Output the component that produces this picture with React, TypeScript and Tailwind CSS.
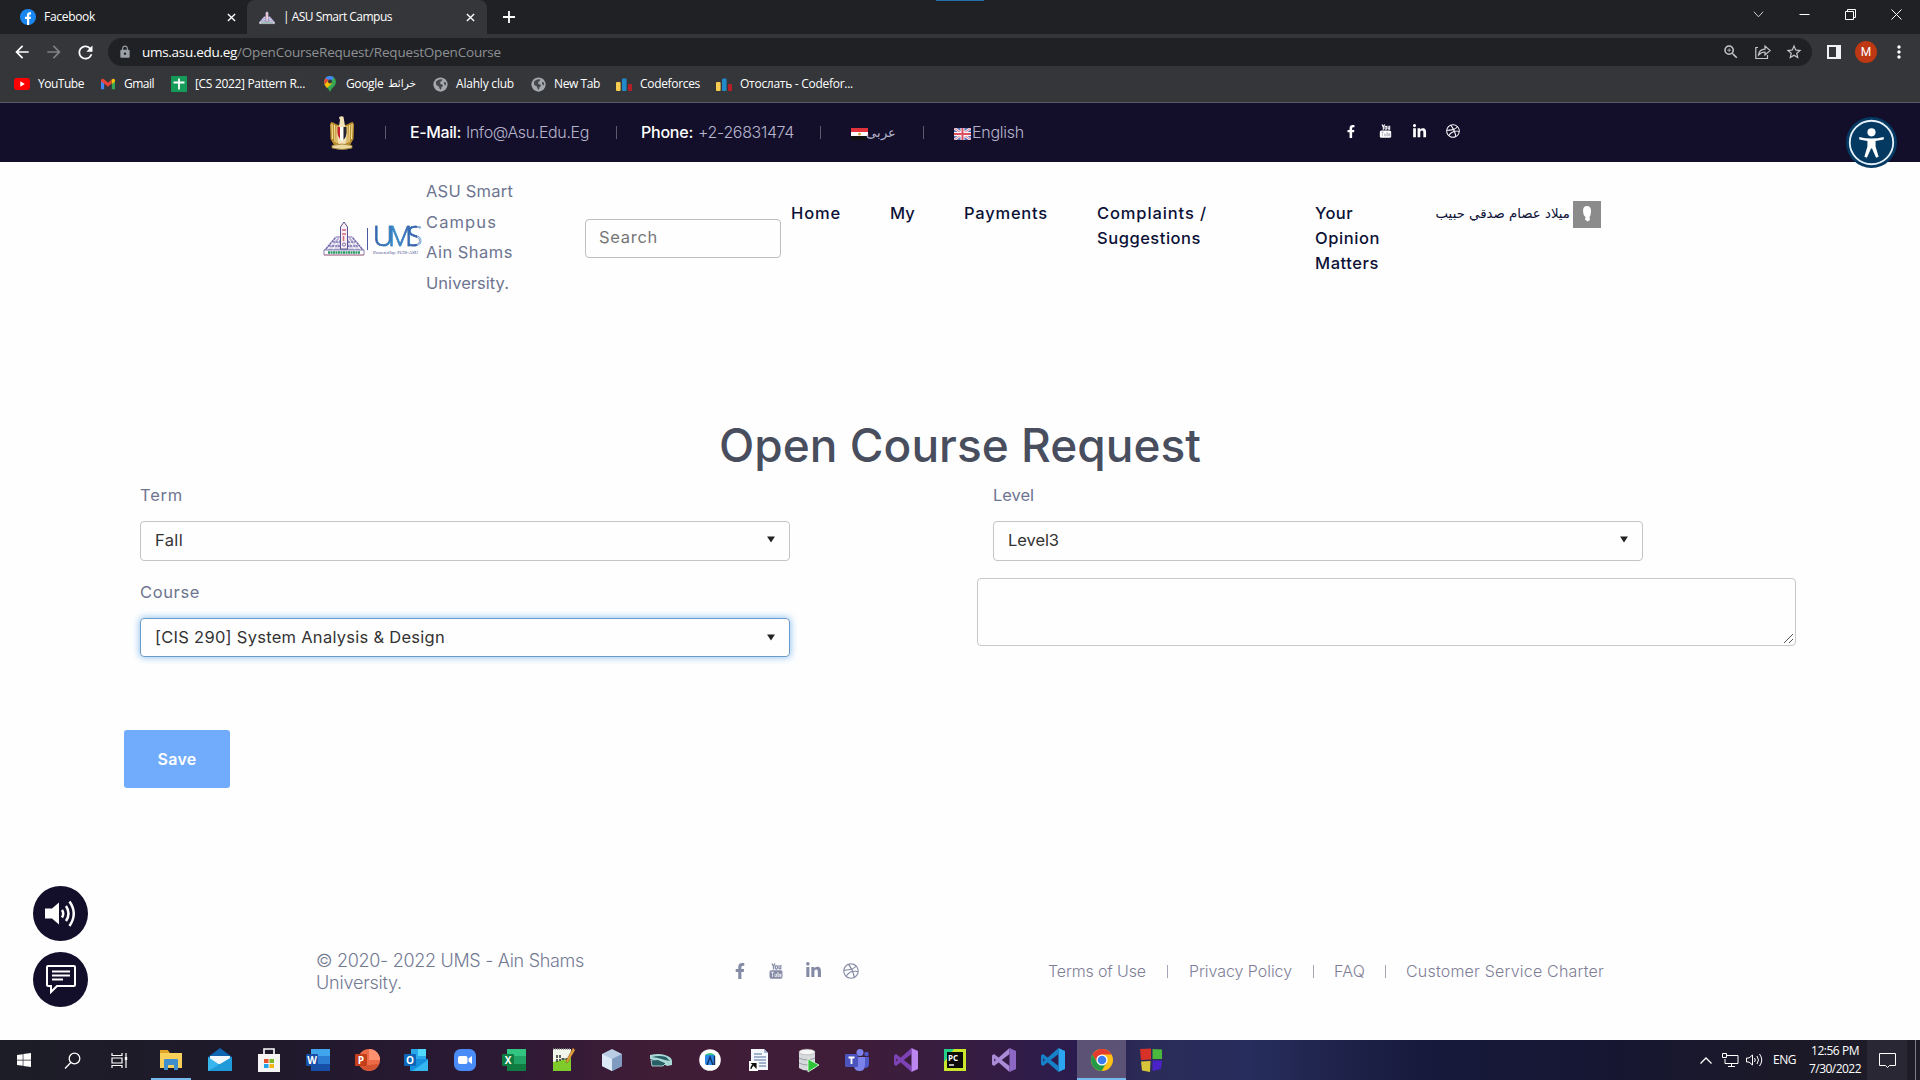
import { useLayoutEffect, useRef, type ReactNode } from "react";
import { FaFacebookF, FaLinkedinIn, FaDribbble, FaWindows } from "react-icons/fa";
import { MdLock, MdRefresh, MdArrowBack, MdArrowForward, MdZoomIn, MdStarBorder, MdPublic, MdMoreVert } from "react-icons/md";

/* Single line of text whose tracking is adjusted to fill the width of its box. */
function Fit({ className = "", children }: { className?: string; children: string }) {
  const box = useRef<HTMLSpanElement>(null);
  const inner = useRef<HTMLSpanElement>(null);
  useLayoutEffect(() => {
    const b = box.current, i = inner.current;
    if (!b || !i) return;
    i.style.letterSpacing = "0px";
    const natural = i.getBoundingClientRect().width;
    i.style.letterSpacing = `${(b.getBoundingClientRect().width - natural) / children.length}px`;
  }, [children]);
  return (
    <span ref={box} className={`inline-block shrink-0 whitespace-pre ${className}`}>
      <span ref={inner}>{children}</span>
    </span>
  );
}

const UI = "font-['Open_Sans',sans-serif]";

function YouTubeOld({ className, inset }: { className: string; inset: string }) {
  return (
    <svg viewBox="0 0 14 16" className={`overflow-visible ${className}`} fill="currentColor">
      <path d="M3 0.500 L4.500 3.500 V6.500 M6 0.500 L4.500 3.500" stroke="currentColor" strokeWidth="1.300" fill="none" />
      <rect x="6.400" y="2.500" width="2" height="3.600" rx="1" fill="none" stroke="currentColor" strokeWidth="1.200" />
      <path d="M10 2 V5.500 Q10 6.200 11.500 5.500 M11.800 2 V6.500" stroke="currentColor" strokeWidth="1.200" fill="none" />
      <rect x="0.500" y="7.300" width="13" height="8.400" rx="1.800" />
      <path d="M2 9.300 H5 M3.500 9.300 V14 M6 10.800 V13.600 H7.500 V10.800 M8.900 9 V13.600 H10.200 V11 H8.900 M12.600 12.200 H11.400 V11 H12.500 M11.400 12 V13.600 H12.600" className={inset} strokeWidth="0.700" fill="none" />
    </svg>
  );
}

function Tower({ className }: { className: string }) {
  return (
    <svg viewBox="0 0 42 35" className={className}>
      <path d="M13 15 L29 15 L41 29 V34 H1 V29 Z" fill="#b9b1d8" />
      <path d="M14 17 L3 30 M17 17 L9 30 M25 17 L33 30 M28 17 L39 30 M8 23 H34 M5 27 H37" stroke="#fff" strokeWidth="1" />
      <path d="M12 17 L2 29 M30 17 L40 29 M10 21 H32 M6 25 H36" stroke="#6c639f" strokeWidth="1.2" strokeDasharray="2 1" fill="none" />
      <path d="M17.500 28 V6 L21 1 L24.500 6 V28 Z" fill="#f8eef4" stroke="#5b5290" strokeWidth="1" />
      <path d="M19 9 H23 M19 13 H23 M20.500 15 V20" stroke="#d46a7c" strokeWidth="1.5" />
      <circle cx="21" cy="23.500" r="1.6" fill="none" stroke="#5b5290" strokeWidth="0.8" />
      <path d="M1 29 H41 V34 H1 Z" fill="#fff" stroke="#6a62a0" strokeWidth="0.8" />
      <path d="M5 31.500 H37" stroke="#2d9767" strokeWidth="2.600" strokeDasharray="2 0.500" />
      <path d="M1 34 H41" stroke="#d27b8c" strokeWidth="0.8" />
    </svg>
  );
}

function Eagle() {
  return (
    <svg viewBox="0 0 26 34" className="h-[34px] w-[26px]">
      <path d="M10 9 C7 9 5 6 2 6 L1 9 L1.500 23 L5 29 H21 L24.500 23 L25 9 L24 6 C21 6 19 9 16 9 Z" fill="#b98c2c" />
      <path d="M3 8 L3.500 23 M5.500 9 L6 26 M8 10 V27 M18 10 V27 M20.500 9 L20 26 M23 8 L22.500 23" stroke="#f5e2a0" strokeWidth="1.100" />
      <path d="M10 1.500 Q12 -0.500 14.500 0.800 L15 4 L16 10 Q19 19 16.500 28 H9.500 Q7 19 10 10 L11 4 Z" fill="#f2e3b6" />
      <path d="M8.500 11 H11 V23 Q8.500 20 8.500 17 Z" fill="#c8222c" />
      <path d="M11 11 H14.500 V24 L13 25 L11 23 Z" fill="#fff" />
      <path d="M14.500 11 H17.500 V17 Q17.500 21 14.500 24 Z" fill="#262330" />
      <path d="M3 29.500 Q13 26.500 23 29.500 V32 Q13 35 3 32 Z" fill="#ead9a0" stroke="#a07c2c" strokeWidth="0.800" />
    </svg>
  );
}

function Close() {
  return <svg viewBox="0 0 10 10" className="size-[9px]" stroke="#fff" strokeWidth="1.500"><path d="M1 1 L9 9 M9 1 L1 9" /></svg>;
}

function CodeforcesIcon() {
  return (
    <svg viewBox="0 0 16 16" className="h-4 w-4">
      <rect x="0" y="6" width="4.600" height="9" rx="1" fill="#f7cb4d" />
      <rect x="6" y="2.500" width="4.600" height="12.500" rx="1" fill="#2189c7" />
      <rect x="12" y="8" width="4" height="7" rx="1" fill="#b81e26" />
    </svg>
  );
}

function GlobeIcon() {
  return (
    <svg viewBox="0 0 16 16" className="ml-[17px] size-[15px]">
      <circle cx="8" cy="8" r="7.600" fill="#a5a8ac" />
      <path d="M3 5 Q6 2 10 2.500 Q10 4.500 8 5 L7.500 7 L10.500 8.500 Q11 10 9 11 L8.500 13.500 Q6.500 13 6.500 10.500 L3.500 8.500 Z" fill="#46474b" />
      <path d="M11.500 5 L14 6 L13.500 9 L12 8 Z" fill="#46474b" />
    </svg>
  );
}

function BrowserChrome() {
  return (
    <div className={`bg-[#35363a] text-white ${UI}`}>
      <div className="relative flex h-[34px] items-center bg-[#202124] text-[12px]">
        <div className="flex h-full w-[247px] items-center pl-5">
          <svg viewBox="0 0 16 16" className="size-4">
            <circle cx="8" cy="8" r="8" fill="#1a86f0" />
            <path d="M7 16 V10 H5 V7.700 H7 V6 Q7 3.300 9.600 3.300 H11 V5.400 H10 Q9.200 5.400 9.200 6.300 V7.700 H11 L10.600 10 H9.200 V16 Z" fill="#fff" />
          </svg>
          <Fit className="ml-2 w-[51px]">Facebook</Fit>
          <div className="ml-[132px]"><Close /></div>
        </div>
        <div className="flex h-full w-[240px] items-center rounded-t-lg bg-[#35363a] pl-3">
          <Tower className="h-[15px] w-4" />
          <Fit className="ml-2 w-[109px]">| ASU Smart Campus</Fit>
          <div className="ml-[74px]"><Close /></div>
        </div>
        <svg viewBox="0 0 12 12" className="ml-4 size-3" stroke="#fff" strokeWidth="1.800"><path d="M6 0 V12 M0 6 H12" /></svg>
        <div className="ml-auto flex items-center gap-[35px] pr-[18px] pb-[5px]">
          <svg viewBox="0 0 12 12" className="size-[11px]" stroke="#ddd" fill="none"><path d="M1 3 L6 8.500 L11 3" /></svg>
          <svg viewBox="0 0 11 11" className="size-[11px]" stroke="#fff" fill="none"><path d="M0.500 5.500 H10.500" /></svg>
          <svg viewBox="0 0 11 11" className="size-[11px]" stroke="#fff" fill="none"><path d="M0.500 2.500 H8.500 V10.500 H0.500 Z M2.500 2.500 V0.500 H10.500 V8.500 H8.500" /></svg>
          <svg viewBox="0 0 11 11" className="size-[11px]" stroke="#fff" fill="none"><path d="M0.500 0.500 L10.500 10.500 M10.500 0.500 L0.500 10.500" /></svg>
        </div>
        <div className="absolute top-0 left-[936px] h-px w-12 bg-[#2570a8]" />
      </div>
      <div className="flex h-9 items-center">
        <MdArrowBack className="ml-3 size-5" />
        <MdArrowForward className="ml-3 size-5 text-[#808184]" />
        <MdRefresh className="ml-[11px] size-[21px]" />
        <div className="ml-3 flex h-7 w-[1704px] items-center rounded-full bg-[#202124] pl-[10px] text-[13.500px]">
          <MdLock className="size-[14px] text-[#9aa0a6]" />
          <Fit className="ml-[10px] w-[95px]">ums.asu.edu.eg</Fit>
          <Fit className="w-[264px] text-[#8d9094]">/OpenCourseRequest/RequestOpenCourse</Fit>
          <MdZoomIn className="mr-[15px] ml-auto size-[18px] text-[#c4c7c9]" />
          <svg viewBox="0 0 16 16" className="mr-[14px] size-4" fill="none" stroke="#c4c7c9" strokeWidth="1.200">
            <path d="M3 3.500 H0.800 V14.500 H12.500 V11" />
            <path d="M3.500 11 Q4 5.500 10 5.200 V2 L15.200 6.500 L10 11 V8 Q6 8 3.500 11 Z" />
          </svg>
          <MdStarBorder className="mr-[9px] size-[18px] text-[#c4c7c9]" />
        </div>
        <svg viewBox="0 0 14 14" className="ml-[15px] size-[14px]"><path d="M0 0 H14 V14 H0 Z M2 2 V12 H9 V2 Z" fill="#f1f3f4" fillRule="evenodd" /></svg>
        <div className="ml-[14px] flex size-[22px] items-center justify-center rounded-full bg-[#bd3813] font-['Roboto'] text-[12px]">M</div>
        <MdMoreVert className="ml-3 size-5" />
      </div>
      <div className="flex h-8 items-center pb-[4px] pl-[14px] text-[12px] whitespace-nowrap">
        <svg viewBox="0 0 16 12" className="h-3 w-4"><rect width="16" height="12" rx="3" fill="#f00" /><path d="M6.300 3.300 L10.800 6 L6.300 8.700 Z" fill="#fff" /></svg>
        <Fit className="ml-2 w-[46px]">YouTube</Fit>
        <svg viewBox="0 0 16 12" className="ml-[17px] h-3 w-[14px]">
          <path d="M0 1.500 V12 H3.600 V4 Z" fill="#4285f4" /><path d="M12.400 4 V12 H16 V1.500 Z" fill="#34a853" />
          <path d="M0 1.500 Q1.500 -1 4 1 L8 4.500 L12 1 V5.500 L8 9 L3.600 5.500 L0 3 Z" fill="#ea4335" /><path d="M12 1 Q15 -1 16 1.500 V3.500 L12.400 6 Z" fill="#fbbc04" />
        </svg>
        <Fit className="ml-[9px] w-[30px]">Gmail</Fit>
        <svg viewBox="0 0 16 16" className="ml-[17px] size-4"><rect width="16" height="16" rx="1" fill="#169c59" /><path d="M8 2.500 V13.500 M2.500 6.500 H13.500" stroke="#fff" strokeWidth="1.800" /></svg>
        <Fit className="ml-2 w-[110px]">[CS 2022] Pattern R...</Fit>
        <svg viewBox="0 0 12 16" className="ml-[19px] h-4 w-3">
          <path d="M6 0 A6 6 0 0 1 12 6 Q12 9 9 11.500 Q7 13 6 16 Q5 13 3 11.500 Q0 9 0 6 A6 6 0 0 1 6 0 Z" fill="#34a853" />
          <path d="M6 0 A6 6 0 0 0 0.800 3 L6 6 L10 1.500 A6 6 0 0 0 6 0 Z" fill="#4285f4" /><path d="M1.300 2.200 Q-0.600 5 0.500 8.500 L5 4 Z" fill="#ea4335" />
          <path d="M0.500 8.500 L5 4 L8 7.500 L3 12 Q1.300 10.300 0.500 8.500Z" fill="#fbbc04" /><circle cx="6" cy="5.500" r="2" fill="#35363a" />
        </svg>
        <Fit className="ml-[10px] w-[40px]">Google </Fit>
        <span className="w-[30px] font-['DejaVu_Sans'] text-[10.500px]" dir="rtl">خرائط</span>
        <GlobeIcon />
        <Fit className="ml-[8px] w-[58px]">Alahly club</Fit>
        <GlobeIcon />
        <Fit className="ml-[8px] w-[46px]">New Tab</Fit>
        <div className="ml-4"><CodeforcesIcon /></div>
        <Fit className="ml-2 w-[60px]">Codeforces</Fit>
        <div className="ml-4"><CodeforcesIcon /></div>
        <Fit className="ml-2 w-[113px]">Отослать - Codefor...</Fit>
      </div>
      <div className="h-px bg-[#5c5b68]" />
    </div>
  );
}

function TopBar() {
  const bar = "h-[13px] w-px bg-[#5d5a70]";
  return (
    <div className="relative flex h-[59px] items-center bg-[#130f2b] pl-[329px] text-[16px] text-[#b6b4cb]">
      <Eagle />
      <div className={`ml-[30px] ${bar}`} />
      <Fit className="ml-6 w-[51px] pb-[2px] font-medium text-white">E-Mail:</Fit>
      <Fit className="ml-[5px] w-[123px] pb-[2px] font-light">Info@Asu.Edu.Eg</Fit>
      <div className={`ml-[27px] ${bar}`} />
      <Fit className="ml-6 w-[52px] pb-[2px] font-medium text-white">Phone:</Fit>
      <Fit className="ml-[5px] w-[96px] pb-[2px] font-light">+2-26831474</Fit>
      <div className={`ml-[26px] ${bar}`} />
      <svg viewBox="0 0 17 12" className="mt-[2px] ml-[30px] h-3 w-[17px]"><rect width="17" height="4" fill="#e0333c" /><rect y="4" width="17" height="4" fill="#fff" /><rect y="8" width="17" height="4" fill="#111" /><circle cx="8.500" cy="6" r="1.500" fill="#d8aa4a" /></svg>
      <span className="w-[28px] font-['DejaVu_Sans'] text-[13px] font-light whitespace-nowrap" dir="rtl">عربى</span>
      <div className={`ml-[27px] ${bar}`} />
      <svg viewBox="0 0 17 12" className="mt-[2px] ml-[30px] h-3 w-[17px]"><rect width="17" height="12" fill="#5b72b6" /><path d="M0 0 L17 12 M17 0 L0 12" stroke="#f3f3f8" strokeWidth="2.600" /><path d="M0 0 L17 12 M17 0 L0 12" stroke="#e46a76" strokeWidth="0.900" /><path d="M8.500 0 V12 M0 6 H17" stroke="#f3f3f8" strokeWidth="4" /><path d="M8.500 0 V12 M0 6 H17" stroke="#e0505e" strokeWidth="2" /></svg>
      <Fit className="ml-px w-[52px] pb-[2px] font-light">English</Fit>
      <div className="ml-[321px] flex items-center pb-[3px] text-white">
        <FaFacebookF className="h-[13px] w-[12px]" />
        <YouTubeOld className="ml-[22px] h-[14px] w-[13px]" inset="stroke-[#9a98aa]" />
        <FaLinkedinIn className="ml-[20px] h-[15px] w-[15px]" />
        <FaDribbble className="ml-[19px] size-[14px]" />
      </div>
      <svg viewBox="0 0 50 50" className="absolute top-[14px] left-[1846px] z-10 size-[51px]">
        <circle cx="25" cy="25" r="25" fill="#043962" /><circle cx="25" cy="25" r="21.300" fill="#043962" stroke="#e6f1fa" strokeWidth="1.800" />
        <circle cx="25" cy="15" r="4" fill="#fff" />
        <path d="M13 19.500 Q25 22.500 37 19.500 V22 L29 23.500 V29 L32 39 L29.500 40 L25.500 31 H24.500 L20.500 40 L18 39 L21 29 V23.500 L13 22 Z" fill="#fff" />
      </svg>
    </div>
  );
}

function Nav() {
  return (
    <div className="flex h-[250px] items-start pl-[323px] text-[16.500px] text-[#0c1136]">
      <div className="mt-[59px] flex w-[98px] items-center">
        <Tower className="h-[35px] w-[42px]" />
        <div className="ml-[2px] h-[22px] w-px bg-[#4b5aa0]" />
        <div className="ml-[5px] flex w-[48px] flex-col">
          <Fit className="w-[44px] bg-gradient-to-r from-[#35559c] via-[#39a4dc] to-[#3a4a9c] bg-clip-text font-['Open_Sans'] text-[28px] leading-[27px] font-light text-transparent [-webkit-text-stroke:0.600px_#356eb5]">UMS</Fit>
          <Fit className="w-[45px] font-['Liberation_Serif'] text-[5px] leading-[7px] text-[#4b5690]">Powered by: FCIS-ASU</Fit>
        </div>
      </div>
      <div className="mt-[14px] ml-[5px] flex w-[159px] flex-col leading-[30.600px] text-[#6d7590]">
        <Fit className="w-[87px]">ASU Smart</Fit>
        <Fit className="w-[71px]">Campus</Fit>
        <Fit className="w-[87px]">Ain Shams</Fit>
        <Fit className="w-[83px]">University.</Fit>
      </div>
      <div className="mt-[57px] flex h-[39px] w-[196px] items-center rounded-[4px] border border-[#bfbfbf] pb-[3px] pl-[13px] text-[#767676]">
        <Fit className="w-[59px]">Search</Fit>
      </div>
      <div className="mt-[39px] ml-[10px] flex leading-[25px]">
        <Fit className="w-[50px] font-medium">Home</Fit>
        <Fit className="ml-[49px] w-[25px] font-medium">My</Fit>
        <Fit className="ml-[49px] w-[84px] font-medium">Payments</Fit>
        <div className="ml-[49px] flex w-[218px] flex-col font-medium">
          <Fit className="w-[110px]">Complaints /</Fit>
          <Fit className="w-[104px]">Suggestions</Fit>
        </div>
        <div className="flex w-[121px] flex-col font-medium">
          <Fit className="w-[38px]">Your</Fit>
          <Fit className="w-[65px]">Opinion</Fit>
          <Fit className="w-[64px]">Matters</Fit>
        </div>
        <span className="w-[134px] text-right font-['DejaVu_Sans'] text-[13.300px] whitespace-nowrap" dir="rtl">ميلاد عصام صدقي حبيب</span>
        <svg viewBox="0 0 28 27" className="ml-[3px] h-[27px] w-[28px]"><rect width="28" height="27" fill="#8b8b8b" /><path d="M14 5 Q18 5 18 10 Q18 14 16.500 16 L17 19 L14.500 20.500 L12 18.500 L12.500 16 Q10 14 10 10 Q10 5 14 5 Z" fill="#fff" /></svg>
      </div>
    </div>
  );
}

function Select({ children, focused = false }: { children: ReactNode; focused?: boolean }) {
  return (
    <div className={`flex w-[650px] items-center justify-between rounded-[4px] border pr-[13px] pl-[14px] text-[#333] ${focused ? "h-[39px] border-[#6a9ccb] pb-px shadow-[0_0_7px_1px_#9cc8f0]" : "h-10 border-[#c4c4c4] pb-[3px]"}`}>
      {children}
      <svg viewBox="0 0 10 8" className="h-[7px] w-[10px]"><path d="M0.500 0.500 H9.500 L5 7.500 Z" fill="#222" /></svg>
    </div>
  );
}

function Form() {
  return (
    <div className="h-[474px] text-[16.500px] leading-6">
      <div className="flex h-[70px] items-center justify-center pb-[4px]">
        <Fit className="w-[482px] text-[46px] leading-[60px] font-medium text-[#484e5e]">Open Course Request</Fit>
      </div>
      <div className="flex pl-[140px] text-[#6d7590]">
        <div className="flex w-[853px] flex-col">
          <Fit className="mt-px w-[43px]">Term</Fit>
          <div className="mt-[14px]"><Select><Fit className="w-[28px]">Fall</Fit></Select></div>
          <Fit className="mt-[19px] w-[60px]">Course</Fit>
          <div className="mt-[14px]"><Select focused><Fit className="w-[290px]">[CIS 290] System Analysis &amp; Design</Fit></Select></div>
        </div>
        <div className="flex flex-col">
          <Fit className="mt-px w-[41px]">Level</Fit>
          <div className="mt-[14px]"><Select><Fit className="w-[51px]">Level3</Fit></Select></div>
          <div className="mt-[17px] -ml-[16px] flex h-[68px] w-[819px] items-end justify-end rounded-[4px] border border-[#c8c8c8] p-[2px]">
            <svg viewBox="0 0 9 9" className="size-[9px]" stroke="#555"><path d="M0 9 L9 0 M5 9 L9 5" /></svg>
          </div>
        </div>
      </div>
      <div className="mt-[73px] ml-[124px] flex h-[58px] w-[106px] items-center justify-center rounded-[3px] bg-[#70abfc] text-[16px] font-semibold text-white">
        <Fit className="w-[39px]">Save</Fit>
      </div>
    </div>
  );
}

function Footer() {
  const bar = "h-[13px] w-px bg-[#a6a5b8]";
  return (
    <div className="flex h-[154px] items-start pl-[33px]">
      <div className="flex flex-col gap-[11px]">
        <div className="flex size-[55px] items-center justify-center rounded-full bg-[#130f2b]">
          <svg viewBox="0 0 34 28" className="h-[28px] w-[34px]" fill="none" stroke="#fff" strokeWidth="2.500">
            <path d="M1 8.500 H8 L15 2.500 V24.500 L8 18.500 H1 Z" fill="#fff" stroke="none" /><path d="M18 10 Q20.500 13.500 18 17.500 M22 6 Q27 13.500 22 21 M25.500 1.500 Q34 13.500 25.500 26" />
          </svg>
        </div>
        <div className="flex size-[55px] items-center justify-center rounded-full bg-[#130f2b]">
          <svg viewBox="0 0 30 29" className="h-[29px] w-[30px]" fill="none" stroke="#fff" strokeWidth="2">
            <path d="M2 1 H28 Q29 1 29 2 V20 Q29 21 28 21 H11 L5 27 V21 H2 Q1 21 1 20 V2 Q1 1 2 1 Z" /><path d="M6 6.500 H24 M6 10.500 H24 M6 14.500 H17" />
          </svg>
        </div>
      </div>
      <div className="mt-[64px] ml-[228px] flex w-[419px] flex-col text-[18px] leading-[22px] font-light text-[#737a94]">
        <Fit className="w-[268px]">© 2020- 2022 UMS - Ain Shams</Fit>
        <Fit className="w-[86px]">University.</Fit>
      </div>
      <div className="mt-[76px] flex w-[313px] items-center text-[#858ba5]">
        <FaFacebookF className="h-[16px] w-[10px]" />
        <YouTubeOld className="ml-[24px] h-[16px] w-[14px]" inset="stroke-white" />
        <FaLinkedinIn className="ml-[22px] h-[17px] w-[17px]" />
        <FaDribbble className="ml-[21px] size-4" />
      </div>
      <div className="mt-[73px] flex items-center text-[16px] leading-6 font-light text-[#7e7e98]">
        <Fit className="w-[98px]">Terms of Use</Fit><div className={`mx-[21px] ${bar}`} />
        <Fit className="w-[103px]">Privacy Policy</Fit><div className={`mr-[20px] ml-[21px] ${bar}`} />
        <Fit className="w-[31px]">FAQ</Fit><div className={`mr-[20px] ml-[20px] ${bar}`} />
        <Fit className="w-[198px]">Customer Service Charter</Fit>
      </div>
    </div>
  );
}

function Office({ letter, dark, mid, light }: { letter: string; dark: string; mid: string; light: string }) {
  return (
    <>
      <rect x="5" y="1" width="19" height="22" rx="1" fill={mid} /><path d="M5 1 H24 V8 H5 Z" fill={light} /><path d="M5 16 H24 V23 H5 Z" fill={dark} />
      <rect x="0" y="6" width="12" height="12" rx="1" fill={dark} />
      <text x="6" y="15.500" fontSize="10" fontWeight="700" textAnchor="middle" fill="#fff" fontFamily="Open Sans">{letter}</text>
    </>
  );
}

function VisualStudio({ dark, light }: { dark: string; light: string }) {
  return (
    <>
      <path d="M0 7.500 L2 6 L17.500 18 V24 L0 8.500 Z" fill={dark} />
      <path d="M0 16.500 L2 18 L17.500 6 V0 L0 15.500 Z" fill={dark} />
      <path d="M0 7.500 L2.300 9.500 V14.500 L0 16.500 Z" fill={dark} />
      <path d="M17.500 0 L24 3 V21 L17.500 24 Z" fill={light} />
    </>
  );
}

const apps: ReactNode[] = [
  <><path d="M1 3 H9 L11 5 H23 V20 H1 Z" fill="#f8cf58" /><path d="M1 2 H9 L10 5 H1 Z" fill="#e0a526" /><path d="M5 12 Q5 11 6 11 H18 Q19 11 19 12 V22 H15 V17 H9 V22 H5 Z" fill="#3f8fce" /></>,
  <><path d="M0 9 L12 0 L24 9 V23 H0 Z" fill="#0f65b0" /><path d="M2 8 H22 V16 H2 Z" fill="#f2f8fc" /><path d="M0 9 L12 17 L24 9 V23 H0 Z" fill="#38b7ee" /><path d="M0 23 L24 9 V23 Z" fill="#219ad9" /></>,
  <><path d="M7 6 V1 H17 V6" fill="none" stroke="#fff" strokeWidth="1.600" /><path d="M1 6 H23 V24 H1 Z" fill="#f5f5f5" /><path d="M7 11 H11.500 V15 H7 Z" fill="#e8522b" /><path d="M12.500 11 H17 V15 H12.500 Z" fill="#7cb928" /><path d="M7 16 H11.500 V20 H7 Z" fill="#20a4e8" /><path d="M12.500 16 H17 V20 H12.500 Z" fill="#f7b617" /></>,
  <Office letter="W" dark="#174fa8" mid="#2b7cd3" light="#41a5ee" />,
  <><circle cx="14" cy="12" r="11" fill="#ed6c47" /><path d="M14 1 A11 11 0 0 1 25 12 H14 Z" fill="#ff9070" /><path d="M5 18 A11 11 0 0 0 24 16 Z" fill="#d35230" /><rect y="6" width="12" height="12" rx="1" fill="#c43e1c" /><text x="6" y="15.500" fontSize="10" fontWeight="700" textAnchor="middle" fill="#fff" fontFamily="Open Sans">P</text></>,
  <><path d="M7 1 H22 V12 H7 Z" fill="#28a8ea" /><path d="M14 1 H22 V8 H14 Z" fill="#50d9ff" /><path d="M6 11 H24 V23 H6 Z" fill="#1490df" /><path d="M24 12 L8 23 H24 Z" fill="#35b8f1" /><rect y="6" width="12" height="12" rx="1" fill="#0f65b8" /><text x="6" y="15.500" fontSize="10" fontWeight="700" textAnchor="middle" fill="#fff" fontFamily="Open Sans">O</text></>,
  <><rect x="1" y="1" width="22" height="22" rx="6.500" fill="#4a8cf7" /><rect x="5" y="8" width="9.500" height="8" rx="2" fill="#fff" /><path d="M15.500 10.500 L19 8 V16 L15.500 13.500 Z" fill="#fff" /></>,
  <Office letter="X" dark="#107c41" mid="#21a366" light="#33c481" />,
  <><path d="M2 1 H20 V23 H2 Z" fill="#f2f5ea" /><path d="M2 14 L20 10 V23 H2 Z" fill="#7fcb2c" /><path d="M2 1 H20" stroke="#888" strokeWidth="1.500" strokeDasharray="1 1" /><path d="M6 7 V15 M9 7 V13 M10.500 11 H17" stroke="#222" strokeWidth="1.400" strokeDasharray="3 1" /><path d="M22 0 L24 2 L17 14 L15 15 L15.500 12 Z" fill="#e0a13c" stroke="#915d24" strokeWidth="0.500" /></>,
  <><path d="M12 1 L22 6 V18 L12 23 L2 18 V6 Z" fill="#b9cde4" /><path d="M2 6 L12 11 V23 L2 18 Z" fill="#dceaf7" /><path d="M12 11 L22 6 V18 L12 23 Z" fill="#7f9cc0" /></>,
  <><path d="M1 7 Q10 5 16 7 Q23 9 23 13 V17 L18 18 L10 13 L1 11 Z" fill="#a8d9d6" /><path d="M3 9 Q11 7 17 9 L21 13 L16 12 L9 10 Z" fill="#285f66" /><path d="M2 12 L9 11.500 L17 15 L14 18 H3 Z" fill="#285f66" stroke="#c9ecea" strokeWidth="0.800" /></>,
  <><circle cx="12" cy="12" r="10.800" fill="#fff" /><path d="M7 7 Q12 3 17 7 V9 H7 Z" fill="#35c37f" /><rect x="7" y="7" width="10" height="10" rx="2" fill="#2b86ea" /><path d="M9 17 L12 9 L15 17 M16.500 8 V17" stroke="#16315c" strokeWidth="1.400" fill="none" /></>,
  <><path d="M4 1 H17 L21 5 V22 H4 Z" fill="#f4f7fb" /><path d="M17 1 V5 H21" fill="#a3b8d2" /><path d="M7 6 H15 M7 9 H19 M7 12 H19 M12 15 H19 M12 18 H19" stroke="#4b6c9c" strokeWidth="1.200" /><rect x="2" y="13" width="9" height="10" fill="#fff" /><path d="M4 21 Q4 17 7 17 M5 15.500 H9 V19.500 Z" stroke="#111" strokeWidth="1.200" fill="#111" /></>,
  <><path d="M3 4 Q11 -1 19 4 V20 Q11 25 3 20 Z" fill="#d7d9dc" /><ellipse cx="11" cy="4" rx="8" ry="2.800" fill="#f5f5f5" stroke="#aaa" strokeWidth="0.600" /><path d="M3 10 Q11 14 19 10 M3 15 Q11 19 19 15" stroke="#9ba0a6" fill="none" /><path d="M12 11 L23 17 L12 24 Z" fill="#2fc43a" stroke="#e6ffe6" strokeWidth="0.800" /></>,
  <><circle cx="15" cy="4.500" r="3.500" fill="#7b83eb" /><circle cx="21.500" cy="6" r="2.300" fill="#5059c9" /><path d="M9 9 H20 V17 Q20 23 14.500 23 Q9 23 9 17 Z" fill="#7b83eb" /><path d="M20 9 H24 V16 Q24 20 20 20 Z" fill="#5059c9" /><rect y="6" width="13" height="13" rx="1" fill="#4b53bc" /><path d="M3.500 9.500 H9.500 M6.500 9.500 V16" stroke="#fff" strokeWidth="1.800" /></>,
  <VisualStudio dark="#7d42b6" light="#bb86ee" />,
  <><rect x="1" y="1" width="22" height="22" fill="#c9e62c" /><path d="M1 1 H11 L1 14 Z" fill="#22d088" /><rect x="4" y="4" width="16" height="16" fill="#0a0a0a" /><text x="5" y="12.500" fontSize="8" fontWeight="700" fill="#fff" fontFamily="Open Sans">PC</text><path d="M6 17 H11" stroke="#fff" strokeWidth="1.400" /></>,
  <VisualStudio dark="#a98bd8" light="#8d67c4" />,
  <VisualStudio dark="#1680c8" light="#2ba5ef" />,
  <><circle cx="12" cy="12" r="11" fill="#fbc116" /><path d="M2.500 6.500 A11 11 0 0 1 21.500 6.500 H12 L7 14 Z" fill="#e33b2e" /><path d="M2.500 6.500 A11 11 0 0 0 11.500 23 L16.700 14.500 L12 17 L7.500 15 Z" fill="#229a48" /><circle cx="12" cy="12" r="5.600" fill="#fff" /><circle cx="12" cy="12" r="4.300" fill="#3b7ded" /></>,
  <><path d="M1 1 L12 0.500 V11.500 L2 12 Z" fill="#d83228" /><path d="M13.500 1 L23 1.500 V11 H13.500 Z" fill="#49b83c" /><path d="M2 13.500 L11.500 13 L11 24 L3 22.500 Z" fill="#d8c63a" /><path d="M13.500 12.500 H23 L22 21 L13.500 23 Z" fill="#4a23c8" /></>,
];

function Taskbar() {
  return (
    <div className={`flex h-10 items-center bg-[linear-gradient(90deg,#1c1d27_0%,#20192c_15%,#2c1934_26%,#401d37_34%,#3f1d38_44%,#351c42_51%,#2b1c4e_56%,#2b2c58_60%,#272d5c_65%,#171a3c_74%,#161632_84%,#1b1927_93%,#1e1d28_100%)] text-white ${UI}`}>
      <FaWindows className="ml-4 size-4" />
      <svg viewBox="0 0 17 17" className="ml-8 size-[17px]" fill="none" stroke="#fff" strokeWidth="1.300"><circle cx="10.500" cy="6.500" r="5.300" /><path d="M6.800 10.500 L1 16.500" /></svg>
      <svg viewBox="0 0 17 17" className="ml-[30px] size-[17px]" fill="none" stroke="#fff" strokeWidth="1.200"><path d="M1 1 V3.500 H11 V1 M1 16 V13.500 H11 V16 M1 6 H11 V11 H1 Z M15 1 V16" /><rect x="13.800" y="5" width="2.400" height="3" fill="#fff" stroke="none" /></svg>
      <div className="ml-[18px] flex h-10">
        {apps.map((icon, i) => (
          <div key={i} className={`flex h-10 w-[49px] items-center justify-center ${i === 19 ? "border-b-2 border-[#76b9ed] bg-[#5c5276] pt-[2px]" : ""}`}>
            <div className={i === 0 ? "flex h-10 w-10 items-center justify-center border-b-2 border-[#76b9ed] pt-[2px]" : "flex"}>
              <svg viewBox="0 0 24 24" className="size-6 overflow-visible">{icon}</svg>
            </div>
          </div>
        ))}
      </div>
      <div className="ml-auto flex h-full items-center">
        <svg viewBox="0 0 12 7" className="h-[7px] w-3" fill="none" stroke="#fff" strokeWidth="1.300"><path d="M0.500 6.500 L6 1 L11.500 6.500" /></svg>
        <svg viewBox="0 0 17 14" className="ml-[10px] h-[14px] w-[17px]" fill="none" stroke="#fff"><path d="M5 2.500 H16 V10.500 H3 V6 M9.500 10.500 V13.500 M6 13.500 H13 M0.500 0.500 H4.500 V4.500 H0.500 Z" /></svg>
        <svg viewBox="0 0 17 14" className="ml-[7px] h-[14px] w-[17px]" fill="none" stroke="#fff"><path d="M0.500 5 H3 L6.500 2 V12 L3 9 H0.500 Z M8.500 5 Q10 7 8.500 9 M11 3 Q14 7 11 11 M13.500 1 Q18 7 13.500 13" /></svg>
        <Fit className="ml-[10px] w-[23px] text-[12px]">ENG</Fit>
        <div className="ml-[12px] flex w-[54px] flex-col items-center text-[12px] leading-[18px]">
          <Fit className="w-[48px]">12:56 PM</Fit>
          <Fit className="w-[52px]">7/30/2022</Fit>
        </div>
        <div className="ml-[5px] flex h-full w-10 items-center justify-center bg-[#282733]">
          <svg viewBox="0 0 17 17" className="size-[17px]" fill="none" stroke="#fff"><path d="M0.500 1.500 H16.500 V13.500 H10.500 L8.500 15.500 L6.500 13.500 H0.500 Z" /></svg>
        </div>
        <div className="ml-2 h-full w-px bg-[#7b7b8c]" />
        <div className="w-1" />
      </div>
    </div>
  );
}

export default function App() {
  return (
    <div className="h-[1080px] w-[1920px] overflow-hidden bg-[#fefefe] font-['Inter',sans-serif]">
      <BrowserChrome />
      <TopBar />
      <Nav />
      <Form />
      <Footer />
      <Taskbar />
    </div>
  );
}
